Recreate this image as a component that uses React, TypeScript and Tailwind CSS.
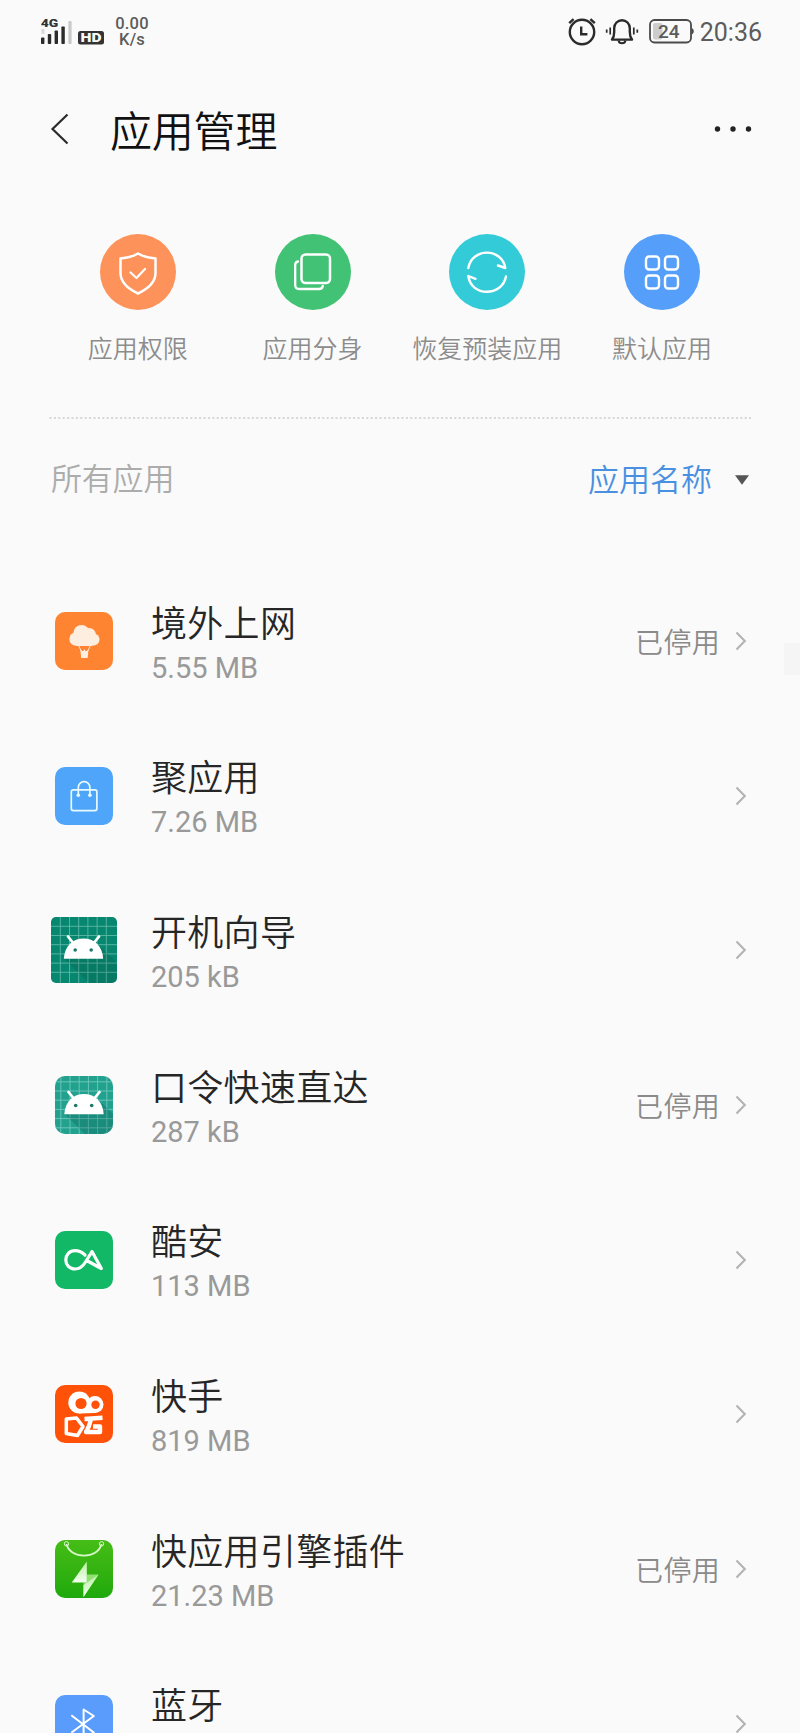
import React from 'react';

type AppItem = {
  name: string;
  size?: string;
  disabled?: boolean;
  icon: React.ReactNode;
};

const StatusBar: React.FC = () => (
  <div className="flex h-[62px] shrink-0 items-start justify-between pl-[41px] pr-[38px] text-[#5c5c5c]">
    <div className="flex items-start">
      <svg width="32" height="28" viewBox="0 0 32 28" className="mt-[18px]">
        <text x="-0.3" y="9.2" fontSize="11" fontWeight="900" fontFamily="Roboto, sans-serif" fill="#333" textLength="17.5" lengthAdjust="spacingAndGlyphs">4G</text>
        <rect x="0.5" y="11" width="3" height="5" fill="#d9d9d9" />
        <rect x="0" y="19.5" width="3.4" height="6.5" rx="0.8" fill="#2b2b2b" />
        <rect x="6.8" y="16" width="3.4" height="10" rx="0.8" fill="#2b2b2b" />
        <rect x="13.6" y="12.5" width="3.4" height="13.5" rx="0.8" fill="#2b2b2b" />
        <rect x="20.4" y="8.5" width="3.4" height="17.5" rx="0.8" fill="#2b2b2b" />
        <rect x="27.4" y="3" width="3.2" height="23" rx="0.8" fill="#c9c9c9" />
      </svg>
      <svg width="26" height="14" viewBox="0 0 26 14" className="ml-[5px] mt-[31px]">
        <rect width="26" height="13.5" rx="2.5" fill="#333" />
        <text x="2.5" y="11" fontSize="12" fontWeight="900" fontFamily="Roboto, sans-serif" fill="#fafafa" textLength="21" lengthAdjust="spacingAndGlyphs">HD</text>
      </svg>
      <div className="ml-[11px] mt-4 w-[34px] text-center text-[16.5px] font-medium leading-4 tracking-[0.2px]">
        <div>0.00</div>
        <div>K/s</div>
      </div>
    </div>

    <div className="flex items-start">
      <svg width="28" height="28" viewBox="0 0 28 28" fill="none" stroke="#2b2b2b" className="mt-[18px]">
        <circle cx="14" cy="14" r="12.2" strokeWidth="2.4" />
        <path d="M13.2 8.5v7.8h6.2" strokeWidth="2.4" />
        <path d="M1.2 5.2L5.6 1.2M26.8 5.2L22.4 1.2" strokeWidth="2.4" />
      </svg>
      <svg width="34" height="28" viewBox="0 0 34 28" fill="none" stroke="#2b2b2b" className="ml-[9px] mt-[18px]">
        <path d="M7 21.6c1.6-2 2.2-4 2.2-7.600V10a7.800 7.800 0 0 1 15.600 0v4c0 3.600.6 5.600 2.200 7.600z" strokeWidth="2.400" strokeLinejoin="round" />
        <path d="M13.500 22.500c.6 3.600 6.400 3.600 7 0" strokeWidth="2" />
        <path d="M5.200 9.500v7M28.800 9.500v7" strokeWidth="1.700" />
        <path d="M1.700 11.500v3.200M32.300 11.500v3.200" strokeWidth="1.700" />
      </svg>
      <svg width="46" height="26" viewBox="0 0 46 26" className="ml-[10px] mt-[18px]">
        <rect x="1" y="2" width="41" height="22.500" rx="4.500" fill="none" stroke="#4a4a4a" strokeWidth="1.800" />
        <path d="M42.500 10v6.500c1.500-.4 2.200-1.500 2.200-3.200s-.7-2.900-2.200-3.300z" fill="#4a4a4a" />
        <rect x="4" y="5" width="9.500" height="16.500" rx="2" fill="#cdcdcd" />
        <text x="9" y="20.200" fontSize="19" fontWeight="500" fontFamily="Roboto, sans-serif" fill="#5c5c5c">24</text>
      </svg>
      <span className="ml-[5px] mt-[18px] text-[25px] leading-[30px]">20:36</span>
    </div>
  </div>
);

const quickActions = [
  {
    label: '应用权限',
    bg: 'bg-[#fd935a]',
    icon: (
      <>
        <path d="M38 19.500c5 3 11 4.500 17.500 5V39c0 9-8 16-17.500 20.500C28.500 55 20.500 48 20.500 39V24.500c6.500-.5 12.500-2 17.500-5z" strokeWidth="2.500" />
        <path d="M30.500 38.500l6 5.500L45 35" strokeWidth="2.200" />
      </>
    ),
  },
  {
    label: '应用分身',
    bg: 'bg-[#41c274]',
    icon: (
      <>
        <rect x="26.500" y="20.500" width="28.500" height="28.500" rx="4" strokeWidth="2.500" />
        <path d="M23 27.500c-2 .4-2.800 1.500-2.800 3.500V51c0 3 1 4 4 4H44c2 0 3.500-1 3.800-3" strokeWidth="2.300" />
      </>
    ),
  },
  {
    label: '恢复预装应用',
    bg: 'bg-[#33cbd8]',
    icon: (
      <>
        <path d="M19.300 34C23 13.500 53 13.500 56.300 34l-7.300-2.500" strokeWidth="2.400" />
        <path d="M57 42.500C53 63 22 63 19.300 42l7.200 2.800" strokeWidth="2.400" />
      </>
    ),
  },
  {
    label: '默认应用',
    bg: 'bg-[#559ffa]',
    icon: (
      <>
        <rect x="22" y="22.500" width="13" height="13" rx="3.200" strokeWidth="2.400" />
        <rect x="41" y="22.500" width="13" height="13" rx="3.200" strokeWidth="2.400" />
        <rect x="22" y="41.500" width="13" height="13" rx="3.200" strokeWidth="2.400" />
        <rect x="41" y="41.500" width="13" height="13" rx="3.200" strokeWidth="2.400" />
      </>
    ),
  },
];

const Tile: React.FC<{ className: string; children: React.ReactNode }> = ({ className, children }) => (
  <div className={`h-[58px] w-[58px] overflow-hidden rounded-[10px] ${className}`}>
    <svg width="58" height="58" viewBox="0 0 58 58" fill="none">{children}</svg>
  </div>
);

const gridLines = [9.3, 18.5, 27.7, 36.9, 46.1, 55.3];

// Default launcher icon: grid background with the droid head
const Droid: React.FC<{ shadow: string; line: string; eye: string }> = ({ shadow, line, eye }) => (
  <>
    {gridLines.map(p => (
      <path key={p} d={`M${p} 0V66M0 ${p}H66`} stroke={line} strokeWidth="0.9" />
    ))}
    <path d="M13 41.500L38 66H66V46L51 31z" fill={shadow} />
    <path d="M17 19.500l6 7.500M48 19.500L42 27" stroke="#fff" strokeWidth="2.800" strokeLinecap="round" />
    <path d="M12.800 41.700C13.500 29 22 21.500 32.500 21.500S51.500 29 52.200 41.700z" fill="#fff" />
    <circle cx="24.200" cy="33" r="1.800" fill={eye} />
    <circle cx="40.200" cy="33" r="1.800" fill={eye} />
  </>
);

const apps: AppItem[] = [
  {
    name: '境外上网',
    size: '5.55 MB',
    disabled: true,
    icon: (
      <Tile className="bg-[#ff8432]">
        <g fill="#fdeee0">
          <circle cx="26.500" cy="21" r="8" />
          <circle cx="21" cy="27" r="6.700" />
          <circle cx="34" cy="23" r="7" />
          <circle cx="38.500" cy="27.500" r="6" />
          <rect x="20" y="25" width="19" height="9" rx="3" />
          <path d="M25.300 37.500l2 1.500h1.200l.9-2 .9 2h1.200l2-1.500-.9 8.500h-6.400z" />
        </g>
        <path d="M23.500 33.500l3 6M35.500 33.500l-3 6" stroke="#fdeee0" strokeWidth="0.900" />
      </Tile>
    ),
  },
  {
    name: '聚应用',
    size: '7.26 MB',
    icon: (
      <Tile className="bg-[#4ea5f9]">
        <rect x="16.300" y="22.800" width="25.600" height="20.800" rx="2" stroke="#e9fbff" strokeWidth="1.700" />
        <path d="M23.300 28V20.500a5.800 5.800 0 0 1 11.600 0V28" stroke="#e9fbff" strokeWidth="1.700" />
        <circle cx="23.300" cy="28.300" r="1.800" fill="#e9fbff" />
        <circle cx="34.900" cy="28.300" r="1.800" fill="#e9fbff" />
      </Tile>
    ),
  },
  {
    name: '开机向导',
    size: '205 kB',
    icon: (
      <div className="h-[66px] w-[66px] overflow-hidden rounded-[5px] bg-[#07876f]">
        <svg width="66" height="66" viewBox="0 0 66 66">
          <Droid shadow="#00000018" line="#5db8a6" eye="#1d7766" />
        </svg>
      </div>
    ),
  },
  {
    name: '口令快速直达',
    size: '287 kB',
    disabled: true,
    icon: (
      <div className="h-[58px] w-[58px] overflow-hidden rounded-[10px] bg-[#22a18f]">
        <svg width="58" height="58" viewBox="3.500 3.500 58 58">
          <Droid shadow="#00504840" line="#6fc8bb" eye="#1d7766" />
        </svg>
      </div>
    ),
  },
  {
    name: '酷安',
    size: '113 MB',
    icon: (
      <Tile className="bg-[#12b866]">
        <path
          d="M30 24C27 21 23.500 19.700 20 19.700C14.500 19.700 10.800 24 10.800 29S14.500 38 20 38c4.500 0 7.700-2.500 10.200-6.500L37 20.500L46.300 37.500L33.500 30.500"
          stroke="#fff"
          strokeWidth="3.200"
          strokeLinecap="round"
          strokeLinejoin="round"
        />
      </Tile>
    ),
  },
  {
    name: '快手',
    size: '819 MB',
    icon: (
      <Tile className="bg-[#ff5208]">
        <g fill="#fff">
          <circle cx="24.300" cy="17.500" r="11" />
          <circle cx="40" cy="19.500" r="8.500" />
          <path d="M24 22h16v6l-16 .5z" />
        </g>
        <circle cx="26" cy="18.500" r="5.600" fill="#ff5208" />
        <circle cx="40.500" cy="19.800" r="4.200" fill="#ff5208" />
        <path d="M11.300 34L21.500 33L28 41.500L22.500 50.500L11.300 48.500z" stroke="#fff" strokeWidth="3.500" strokeLinejoin="round" />
        <path d="M47.500 32.800L29.500 34M36 34L34 41L31 47H45V41.500H38" stroke="#fff" strokeWidth="4.400" strokeLinejoin="round" />
      </Tile>
    ),
  },
  {
    name: '快应用引擎插件',
    size: '21.23 MB',
    disabled: true,
    icon: (
      <Tile className="bg-linear-to-b from-[#45bd16] to-[#1ea90c]">
        <defs>
          <linearGradient id="bolt" x1="0" y1="0" x2="0" y2="1">
            <stop offset="0" stopColor="#b9f2a0" />
            <stop offset="1" stopColor="#f3fff0" />
          </linearGradient>
        </defs>
        <path d="M11.500 4C15 19.500 43 19.500 46.500 4" stroke="#d9f7c8" strokeWidth="1.700" />
        <circle cx="11.500" cy="3.800" r="2.200" stroke="#d9f7c8" strokeWidth="1" />
        <circle cx="46.500" cy="3.800" r="2.200" stroke="#d9f7c8" strokeWidth="1" />
        <path d="M31.800 34.500H43.500L28.500 57V42.500h3.300z" fill="#8fe070" />
        <path d="M43.500 34.500L28.500 57V45z" fill="url(#bolt)" />
        <path d="M31.800 21.500V42.500H16.800z" fill="url(#bolt)" />
      </Tile>
    ),
  },
  {
    name: '蓝牙',
    icon: (
      <Tile className="bg-[#599cfb]">
        <path d="M16.300 20.300L38.800 37.500L28.600 44V14.500L38.800 21L16.300 37.700" stroke="#fff" strokeWidth="2" strokeLinejoin="round" />
      </Tile>
    ),
  },
];

const AppRow: React.FC<{ app: AppItem }> = ({ app }) => (
  <div className="flex h-[154.700px] shrink-0 items-center">
    <div className="flex w-[66px] shrink-0 justify-center">{app.icon}</div>
    <div className="ml-[34px] flex-1 pt-2.5">
      <div className="text-[36px] font-[350] leading-[42px] tracking-[0.3px] text-[#262626]">{app.name}</div>
      <div className="h-[43px] text-[29px] leading-[44px] text-[#999]">{app.size}</div>
    </div>
    {app.disabled && (
      <span className="mr-[15px] mt-1.5 text-[28px] font-[350] leading-[40px] tracking-[0.3px] text-[#8a8a8a]">已停用</span>
    )}
    <svg width="12" height="20" viewBox="0 0 12 20" fill="none" className="mr-[3px]">
      <path d="M1.500 1.500L9.800 10L1.500 18.500" stroke="#b3b3b3" strokeWidth="2.100" />
    </svg>
  </div>
);

export default function App() {
  return (
    <div className="relative flex h-[1733px] w-[800px] flex-col overflow-hidden bg-[#fafafa] font-[Roboto,'Noto_Sans_CJK_SC',sans-serif] font-normal">
      <StatusBar />

      <header className="flex h-[134px] shrink-0 items-center pl-[50px] pr-[48px]">
        <svg width="20" height="32" viewBox="0 0 20 32" fill="none">
          <path d="M17.500 1.500L2.500 16L17.500 30.500" stroke="#2b2b2b" strokeWidth="2.200" />
        </svg>
        <h1 className="ml-10 mt-[7px] flex-1 text-[42px] font-[350] leading-[56px] tracking-[-0.2px] text-[#111]">应用管理</h1>
        <svg width="38" height="8" viewBox="0 0 38 8" fill="#222">
          <circle cx="3.500" cy="4" r="2.700" />
          <circle cx="19" cy="4" r="2.700" />
          <circle cx="34.500" cy="4" r="2.700" />
        </svg>
      </header>

      <nav className="mx-[50.500px] mt-[38px] grid h-[183px] shrink-0 grid-cols-4">
        {quickActions.map(action => (
          <div key={action.label} className="flex flex-col items-center">
            <div className={`h-[76px] w-[76px] rounded-full ${action.bg}`}>
              <svg width="76" height="76" viewBox="0 0 76 76" fill="none" stroke="#fff" strokeLinejoin="round" strokeLinecap="round">
                {action.icon}
              </svg>
            </div>
            <span className="mt-[22px] whitespace-nowrap text-[25px] font-[350] leading-[36px] text-[#8c8c8c]">{action.label}</span>
          </div>
        ))}
      </nav>

      <svg width="702" height="2" className="ml-[49px] shrink-0">
        <path d="M0.500 1H702" stroke="#d6d6d6" strokeWidth="2" strokeDasharray="2 2.400" />
      </svg>

      <div className="flex h-[144.700px] shrink-0 items-start justify-between pl-[51px] pr-[51px] pt-[41px]">
        <span className="text-[31px] font-[350] leading-[40px] tracking-[-0.2px] text-[#acacac]">所有应用</span>
        <div className="flex items-center">
          <span className="text-[31px] font-[350] leading-[42px] text-[#4a90e0]">应用名称</span>
          <svg width="14" height="10" viewBox="0 0 14 10" className="mb-[3px] ml-[23px]">
            <path d="M0 0.300H14L7 9.700z" fill="#555" />
          </svg>
        </div>
      </div>

      <main className="flex shrink-0 flex-col pl-[51px] pr-[50px]">
        {apps.map(app => (
          <AppRow key={app.name} app={app} />
        ))}
      </main>

      {/* scroll thumb at the right edge */}
      <div className="absolute right-0 top-[643px] h-[32px] w-[16px] bg-[#f5f5f5]" />
    </div>
  );
}
